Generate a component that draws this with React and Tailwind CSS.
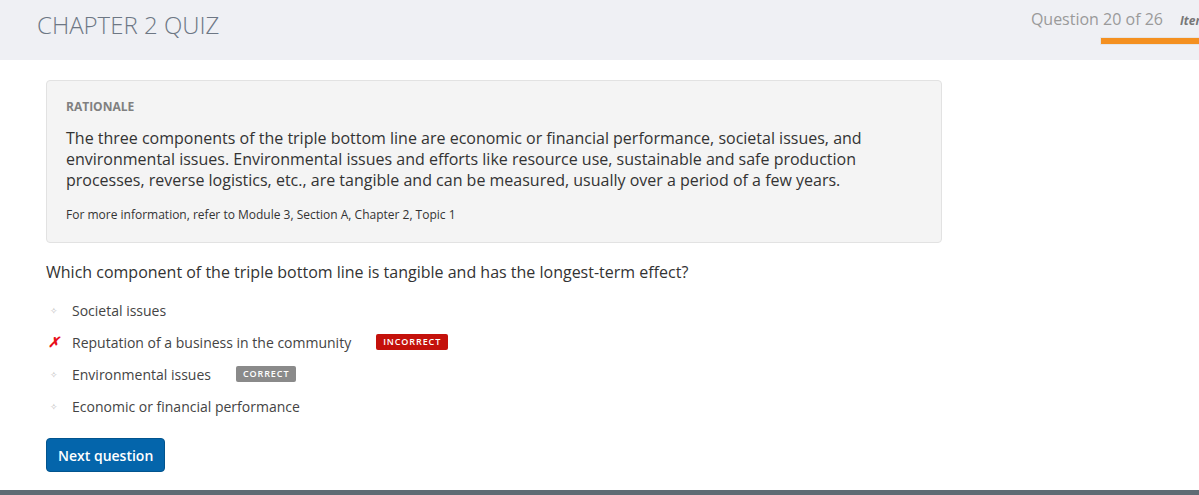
import React from 'react';

const options = [
  { label: 'Societal issues', mark: 'dot' },
  { label: 'Reputation of a business in the community', mark: 'x', badge: 'INCORRECT' },
  { label: 'Environmental issues', mark: 'dot', badge: 'CORRECT' },
  { label: 'Economic or financial performance', mark: 'dot' },
];

function Bullet({ mark }) {
  if (mark === 'x') {
    return <span className="w-[26px] text-[14px] font-bold italic text-[#e8101a] leading-none pl-[2px]">✗</span>;
  }
  return (
    <span className="w-[26px] flex items-center pl-[4px]">
      <span className="text-[9px] leading-none text-[#bbbbbb]">✧</span>
    </span>
  );
}

export default function App() {
  return (
    <div className="min-h-[495px] bg-white flex flex-col font-['Open_Sans',sans-serif] overflow-hidden">
      {/* Header */}
      <div className="h-[60px] bg-[#eff0f4] flex items-start justify-between">
        <h1 className="pl-[37px] pt-[7px] text-[24px] font-light text-[#6d7784]">CHAPTER 2 QUIZ</h1>
        <div className="flex flex-col items-end">
          <div className="flex items-baseline gap-[17px] pt-[7px] whitespace-nowrap">
            <span className="text-[16px] text-[#9a9a9a]">Question 20 of 26</span>
            <span className="text-[12px] font-bold italic text-[#777] w-[19px] overflow-hidden">Item</span>
          </div>
          <div className="mt-[6px] h-[8px] w-[99px] bg-[#f49020] border border-[#e5e5e5] border-r-0" />
        </div>
      </div>

      {/* Body */}
      <div className="pl-[46px] pt-[20px] flex-1">
        <div className="w-[896px] bg-[#f4f4f4] border border-[#e2e2e2] rounded-[4px] px-[19px] pt-[17px] pb-[19px]">
          <div className="text-[12px] font-bold text-[#808080] leading-[18px]">RATIONALE</div>
          <p className="mt-[12px] text-[16px] leading-[21px] text-[#333]">
            The three components of the triple bottom line are economic or financial performance, societal issues, and environmental issues. Environmental issues and efforts like resource use, sustainable and safe production processes, reverse logistics, etc., are tangible and can be measured, usually over a period of a few years.
          </p>
          <p className="mt-[16px] text-[12px] leading-[16px] text-[#333]">
            For more information, refer to Module 3, Section A, Chapter 2, Topic 1
          </p>
        </div>

        <p className="mt-[19px] text-[16px] leading-[20px] text-[#333]">
          Which component of the triple bottom line is tangible and has the longest-term effect?
        </p>

        <ul className="mt-[18px] flex flex-col gap-[12px]">
          {options.map((o) => (
            <li key={o.label} className="flex items-center h-[20px]">
              <Bullet mark={o.mark} />
              <span className="text-[14px] text-[#444]">{o.label}</span>
              {o.badge === 'INCORRECT' && (
                <span className="ml-[25px] h-[16px] px-[7px] flex items-center rounded-[2px] bg-[#c4110b] text-white text-[9px] font-semibold tracking-[0.9px]">INCORRECT</span>
              )}
              {o.badge === 'CORRECT' && (
                <span className="ml-[25px] h-[16px] px-[7px] flex items-center rounded-[2px] bg-[#8a8a8a] text-white text-[9px] font-semibold tracking-[0.9px]">CORRECT</span>
              )}
            </li>
          ))}
        </ul>

        <button className="mt-[22px] h-[34px] px-[11px] rounded-[4px] bg-[#0465ab] border border-[#02548e] text-white text-[14px] font-semibold">
          Next question
        </button>
      </div>

      <div className="h-[5px] bg-[#5f6b74]" />
    </div>
  );
}
